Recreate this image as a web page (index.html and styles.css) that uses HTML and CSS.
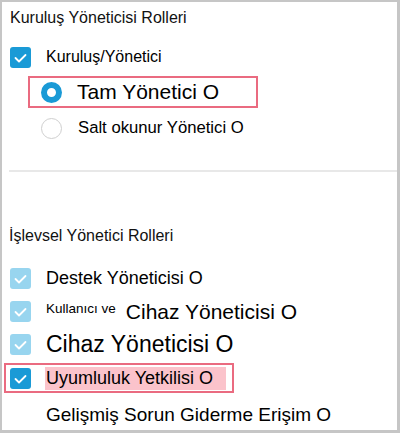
FILE: index.html
```html
<!DOCTYPE html>
<html lang="tr">
<head>
<meta charset="utf-8">
<link rel="stylesheet" href="styles.css">
</head>
<body>
<div class="frame">
  <div class="heading h1">Kuruluş Yöneticisi Rolleri</div>
  <div class="row org">
    <span class="cb dark"><svg viewBox="0 0 21 21"><path d="M5.5 11 L9 14.5 L15.5 8"/></svg></span>
    <span class="t16">Kuruluş/Yönetici</span>
  </div>
  <div class="radio-hl">
    <span class="radio on"></span>
    <span class="t21">Tam Yönetici O</span>
  </div>
  <div class="radio-row">
    <span class="radio"></span>
    <span class="t17">Salt okunur Yönetici O</span>
  </div>
  <div class="sep"></div>
  <div class="heading h2">İşlevsel Yönetici Rolleri</div>
  <div class="list">
    <div class="row">
      <span class="cb light"><svg viewBox="0 0 21 21"><path d="M5.5 11 L9 14.5 L15.5 8"/></svg></span>
      <span class="t18">Destek Yöneticisi O</span>
    </div>
    <div class="row">
      <span class="cb light"><svg viewBox="0 0 21 21"><path d="M5.5 11 L9 14.5 L15.5 8"/></svg></span>
      <span class="t13 small-up">Kullanıcı ve</span>
      <span class="t21 gap">Cihaz Yöneticisi O</span>
    </div>
    <div class="row">
      <span class="cb light"><svg viewBox="0 0 21 21"><path d="M5.5 11 L9 14.5 L15.5 8"/></svg></span>
      <span class="t23">Cihaz Yöneticisi O</span>
    </div>
    <div class="row hl">
      <span class="cb dark"><svg viewBox="0 0 21 21"><path d="M5.5 11 L9 14.5 L15.5 8"/></svg></span>
      <span class="t18 pinkbg">Uyumluluk Yetkilisi O</span>
    </div>
    <div class="row">
      <span class="cb blank"></span>
      <span class="t19">Gelişmiş Sorun Giderme Erişim O</span>
    </div>
  </div>
</div>
</body>
</html>
```
FILE: styles.css
```css
html, body {
  margin: 0;
  padding: 0;
  background: #fff;
}
body {
  font-family: "Liberation Sans", Arial, sans-serif;
  color: #000;
}
.frame {
  width: 400px;
  height: 433px;
  box-sizing: border-box;
  border: 2px solid #c6c6c6;
  border-right-width: 3px;
  border-bottom-width: 3px;
  padding: 6px 0 0 6px;
  display: flex;
  flex-direction: column;
  overflow: hidden;
}
.frame > *, .list > * {
  flex: none;
}
.heading {
  font-size: 16px;
  line-height: 20px;
  color: #111;
}
.h1 { margin-left: 2px; }
.h2 { margin-left: 1px; margin-top: 54px; }
.row {
  display: flex;
  align-items: center;
  height: 22px;
  margin-left: 2px;
}
.org { margin-top: 18px; }
.cb {
  width: 21px;
  height: 21px;
  border-radius: 3px;
  flex: none;
  margin-right: 15px;
  display: flex;
}
.cb svg {
  width: 21px;
  height: 21px;
  fill: none;
  stroke: #fff;
  stroke-width: 1.8;
  stroke-linecap: round;
  stroke-linejoin: round;
}
.cb.dark { background: #1a9ad6; }
.cb.light { background: #98d5ef; }
.cb.blank { background: transparent; }
.t13 { font-size: 13.5px; }
.t16 { font-size: 16px; }
.t17 { font-size: 16.7px; }
.t18 { font-size: 18px; }
.t19 { font-size: 19px; }
.t21 { font-size: 21px; }
.t23 { font-size: 23px; }
.radio-hl {
  margin-top: 8px;
  margin-left: 20px;
  width: 230px;
  height: 32px;
  box-sizing: border-box;
  border: 2px solid #ea6b80;
  display: flex;
  align-items: center;
  padding-left: 11px;
}
.radio-row {
  display: flex;
  align-items: center;
  height: 22px;
  margin-top: 9px;
  margin-left: 22px;
  padding-left: 11px;
}
.radio {
  width: 21px;
  height: 21px;
  box-sizing: border-box;
  border-radius: 50%;
  border: 1.5px solid #cfcfcf;
  flex: none;
  margin-right: 15px;
}
.radio.on {
  border: 6px solid #1a9ad6;
}
.radio-row .radio { margin-right: 16px; }
.sep {
  margin-top: 31px;
  height: 2px;
  background: #e8e8e8;
  margin-left: 1px;
}
.list {
  display: flex;
  flex-direction: column;
  margin-top: 16px;
}
.list .row { height: 33px; }
.small-up { margin-bottom: 6px; }
.gap { margin-left: 10px; }
.row.hl {
  margin-left: -4px;
  width: 230px;
  height: 30px;
  box-sizing: border-box;
  border: 2px solid #ea6b80;
  padding-left: 4px;
  margin-top: 2px;
  margin-bottom: 2px;
}
.pinkbg {
  background: #fbc3cb;
  margin-left: -1px;
  padding-left: 1px;
  padding-right: 13px;
  line-height: 23px;
}
.list .row:last-child { height: 40px; }
```
